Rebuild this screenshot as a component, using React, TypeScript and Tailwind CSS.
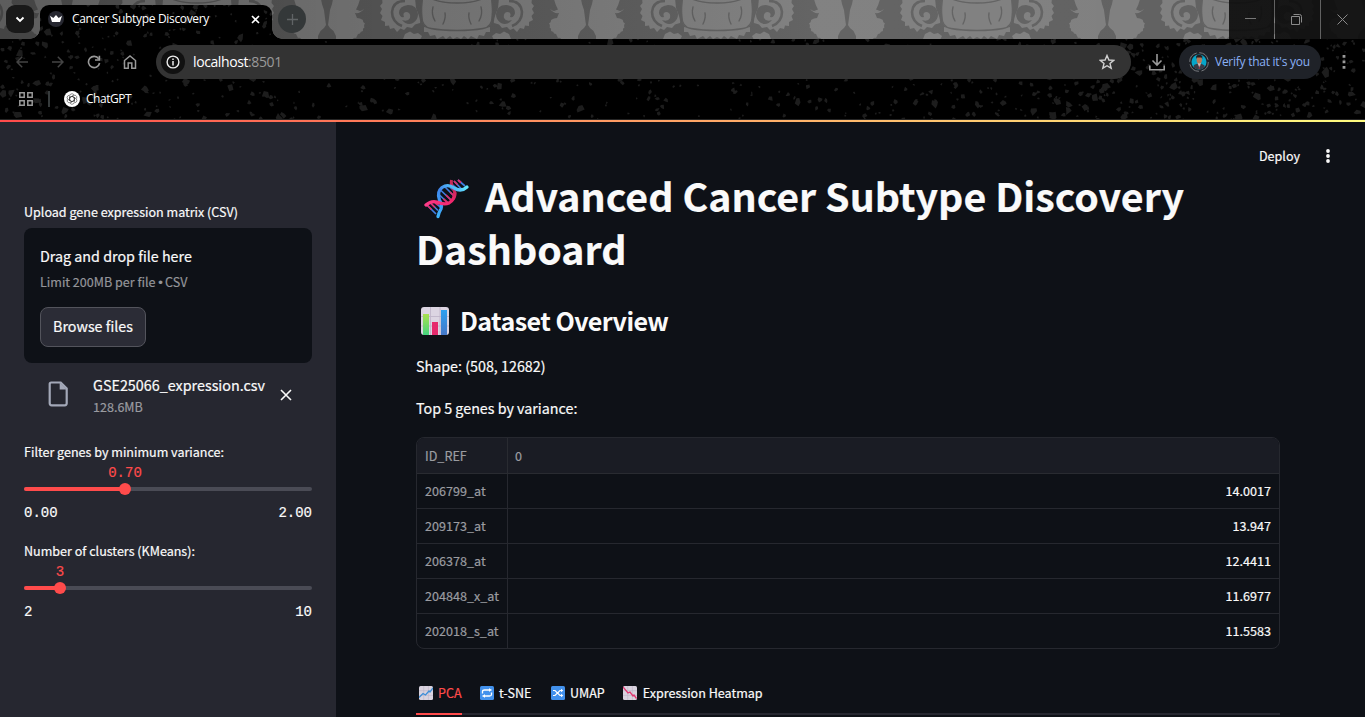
import React from "react";

const sans = "font-['Noto_Sans_CJK_SC',sans-serif]";
const ui = "font-['Open_Sans','Noto_Sans',sans-serif]";
const mono = "font-['Liberation_Mono',monospace]";

function makeSpeckles() {
  let seed = 4217;
  const rnd = () => {
    seed = (seed * 1664525 + 1013904223) % 4294967296;
    return seed / 4294967296;
  };
  const parts: string[] = [];
  for (let i = 0; i < 2200; i++) {
    const x = rnd() * 1365;
    const y = rnd() * 120;
    const density = x < 290 ? 0.65 : x < 480 ? 0.34 : x < 860 ? 0.45 : x < 980 ? 0.6 : 0.95;
    const keep = rnd() < density;
    const big = rnd();
    const r = big > 0.9 ? 4 : big > 0.5 ? 2.5 : 1.3;
    const n = 5;
    const pts: string[] = [];
    for (let k = 0; k < n; k++) {
      const a = (k / n) * Math.PI * 2 + rnd() * 0.9;
      const q = r * (0.55 + rnd() * 0.7);
      pts.push(`${(x + Math.cos(a) * q).toFixed(1)} ${(y + Math.sin(a) * q).toFixed(1)}`);
    }
    if (keep) parts.push(`M${pts.join("L")}Z`);
  }
  return parts.join("");
}
const speckles = makeSpeckles();

function HalfMotif() {
  return (
    <g>
      <path d="M0-1H34Q35 5 35 16Q36 27 26 29Q14 31 0 31Z" fill="#777" />
      <path d="M0 30Q18 31 33 27L33 32L29 32L27 36L22 35L20 39L14 36L11 39L7 36L4 39L0 37Z" fill="#777" />
      <path d="M0 3Q16 3 25-1M35 0Q36 8 35 17Q35 27 26 28.500Q15 30.500 0 30.500" fill="none" stroke="#585858" strokeWidth="1.300" />
      <path d="M24 7Q26 14 22 21M12 13Q11 18 14 24" fill="none" stroke="#585858" strokeWidth="1.400" strokeLinecap="round" />
      <path d="M42-2H75L74.500 3L77 6L75 9L77 13L74.500 16L76 20L72 22L72 26L68 25.500L67 29L63 28L60 32L56.500 28.500L53 30L50 27L45 28L42 24.500L37 23Q36 20 41 8Z" fill="#777" />
      <path d="M52 1Q64 1 65 12Q65 22 55 26" fill="none" stroke="#585858" strokeWidth="2.600" />
      <path d="M39 14Q40 5 49 5Q58 6 58 13Q57 18 53 17Q55 12 50 12Q46 13 47 18Q49 22 55 20Q50 26 44 23Q39 20 39 14Z" fill="#585858" />
      <path d="M37 40L35 36L39 33L43 34L47 31.500L52 34L54 39L51 41Z" fill="#777" />
      <path d="M124-1L125 4L127 10L128 18L129 25L127 28L123.500 31L121 36L121 40L105 40Q103 37 101 38L99 34Q96 34 96.500 32L94 31Q94.500 28 92.500 27.500Q93.500 25 92 23.500Q94.500 22 94 20Q97 18 100 18L102 13L97 11L101 9.500Q98 4 97-1Z" fill="#777" />
      <path d="M93 9Q98 13 103 10L102 13Q97 14 93 9Z" fill="#777" />
    </g>
  );
}

function TabStripArt() {
  return (
    <svg className="absolute inset-0" width="1365" height="39" viewBox="0 0 1365 39" aria-hidden>
      <defs>
        <linearGradient id="stripShade" x1="0" x2="1">
          <stop offset="0" stopColor="#000" stopOpacity=".22" />
          <stop offset=".3" stopColor="#000" stopOpacity=".06" />
          <stop offset=".6" stopColor="#fff" stopOpacity=".08" />
          <stop offset="1" stopColor="#fff" stopOpacity=".06" />
        </linearGradient>
      </defs>
      <rect width="1365" height="39" fill="#575757" />
      {[-63, 197, 457, 717, 977, 1237, 1497].map((x) => (
        <g key={x}>
          <g transform={`translate(${x} 0)`}><HalfMotif /></g>
          <g transform={`translate(${x} 0) scale(-1 1)`}><HalfMotif /></g>
        </g>
      ))}
      <rect width="1365" height="39" fill="url(#stripShade)" />
      <path d="M1229 0H1274V39H1229ZM1275 0H1320V39H1275ZM1321 0H1365V39H1321Z" fill="#0b0b0b" fillOpacity=".9" />
    </svg>
  );
}

function ThemeSpeckles() {
  return (
    <svg className="absolute inset-0" width="1365" height="120" viewBox="0 0 1365 120" aria-hidden>
      <clipPath id="chromeArea">
        <path d="M0 39H30Q40 38 40 29V13Q40 5 48 5H264Q272 5 272 13V29Q273 39 282 39H1365V119H0Z" />
      </clipPath>
      <path d={speckles} fill="#1d1d1d" clipPath="url(#chromeArea)" />
    </svg>
  );
}

function Ic({ w, h = w, vb, children, cls = "" }: { w: number; h?: number; vb?: string; children: React.ReactNode; cls?: string }) {
  return (
    <svg width={w} height={h} viewBox={vb ?? `0 0 ${w} ${h}`} fill="none" className={`block shrink-0 ${cls}`} aria-hidden>
      {children}
    </svg>
  );
}

function BrowserChrome() {
  return (
    <header className={`relative h-[120px] w-full overflow-hidden bg-black text-white ${ui}`}>
      <TabStripArt />
      <div className="relative flex h-[39px] items-start">
        <div className="h-[39px] w-[40px] shrink-0 pl-[6px] pt-[5px]">
          <div className="relative z-20 flex h-7 w-7 items-center justify-center rounded-[9px] bg-[#191919]">
            <Ic w={10} h={7}><path d="M1.500 1.500L5 5L8.500 1.500" stroke="#fff" strokeWidth="1.900" /></Ic>
          </div>
          <div className="absolute bottom-0 left-[30px] h-[10px] w-[10px] bg-[radial-gradient(circle_at_0_0,transparent_9.5px,#000_10px)]" />
        </div>
        <div className="mt-[5px] h-[34px] w-[232px] shrink-0 rounded-t-[9px] bg-black">
          <div className="relative z-20 flex h-7 items-center pl-2 pr-[12px]">
            <Ic w={16}>
              <circle cx="8" cy="8" r="8" fill="#262730" />
              <path d="M2 4.800L5.300 6.900L8 4L10.700 6.900L14 4.800L12 11H4Z" fill="#fff" />
            </Ic>
            <span className="ml-[8px] whitespace-nowrap text-[12px] leading-4 tracking-[-0.33px]">Cancer Subtype Discovery</span>
            <Ic w={9} cls="ml-auto"><path d="M1 1L8 8M8 1L1 8" stroke="#fff" strokeWidth="1.600" /></Ic>
          </div>
        </div>
        <div className="relative h-[39px]">
          <div className="absolute bottom-0 left-0 h-[10px] w-[10px] bg-[radial-gradient(circle_at_100%_0,transparent_9.5px,#000_10px)]" />
          <div className="relative z-20 ml-[6px] mt-[5px] flex h-7 w-7 items-center justify-center rounded-full bg-[#343839]">
            <Ic w={11}><path d="M5.500 0V11M0 5.500H11" stroke="#606466" strokeWidth="1.300" /></Ic>
          </div>
        </div>
        <div className="z-20 ml-auto flex h-[39px] w-[136px] items-center">
          <div className="flex w-[46px] justify-center pr-[3px]"><Ic w={11} cls="-mt-[2px]"><path d="M0 5.500H11" stroke="#777" /></Ic></div>
          <div className="flex w-[46px] justify-center pr-[3px]">
            <Ic w={11} cls="-mt-px"><path d="M.5 2.500H8.500V10.500H.5ZM2.500 .5H8.500Q10.500.5 10.500 2.500V8.500" stroke="#8a8a8a" /></Ic>
          </div>
          <div className="flex w-[44px] justify-center pr-px"><Ic w={11} cls="-mt-px"><path d="M.5.5L10.500 10.500M10.500.5L.5 10.500" stroke="#8a8a8a" /></Ic></div>
        </div>
      </div>
      <ThemeSpeckles />
      <div className="relative flex h-[46px] items-center pl-[16px] pr-[12px]">
        <Ic w={12} cls="ml-0"><path d="M12 6H1M6.200.8L1 6L6.200 11.200" stroke="#444" strokeWidth="1.500" /></Ic>
        <Ic w={12} cls="ml-[24px]"><path d="M0 6H11M5.800.8L11 6L5.800 11.200" stroke="#444" strokeWidth="1.500" /></Ic>
        <Ic w={14} cls="ml-[23px]">
          <path d="M11.700 3.800A5.600 5.600 0 1 0 12.600 8" stroke="#999" strokeWidth="1.600" />
          <path d="M12.400.8V5H8" stroke="#999" strokeWidth="1.600" />
        </Ic>
        <Ic w={14} cls="ml-[22px]"><path d="M1.500 5.500L7 1L12.500 5.500V13.200H8.800V8H5.200V13.200H1.500Z" stroke="#999" strokeWidth="1.500" /></Ic>
        <div className="ml-[19px] flex h-[34px] w-[975px] shrink-0 items-center rounded-full bg-[#333] pl-[5px] pr-[16px]">
          <div className="flex h-6 w-6 items-center justify-center rounded-full bg-[#111]">
            <Ic w={14}><circle cx="7" cy="7" r="5.900" stroke="#eee" strokeWidth="1.400" /><path d="M7 6V10.500M7 3.500V5" stroke="#eee" strokeWidth="1.500" /></Ic>
          </div>
          <span className="ml-[8px] text-[14px] leading-5 tracking-[-0.4px]">localhost<span className="text-[#9a9a9a]">:8501</span></span>
          <Ic w={16} cls="ml-auto"><path d="M8 1.500L9.900 6L14.700 6.400L11 9.500L12.200 14.200L8 11.700L3.800 14.200L5 9.500L1.300 6.400L6.100 6Z" stroke="#d0d0d0" strokeWidth="1.400" /></Ic>
        </div>
        <Ic w={16} h={17} cls="ml-[18px]"><path d="M8 0V11M3.500 6.500L8 11L12.500 6.500M.8 11.500V15.700H15.200V11.500" stroke="#999" strokeWidth="1.600" /></Ic>
        <div className="ml-[14px] flex h-[34px] w-[142px] shrink-0 items-center rounded-full bg-[#1f2228] pl-[10px]">
          <Ic w={20}>
            <circle cx="10" cy="10" r="9.300" stroke="#76797d" strokeWidth="1" strokeDasharray="12 2.600" />
            <clipPath id="avatarClip"><circle cx="10" cy="10" r="7.500" /></clipPath>
            <g clipPath="url(#avatarClip)">
              <rect width="20" height="20" fill="#06a6c9" />
              <path d="M4 18L5 13L8.500 11.500H12L15.500 13.500L16 18Z" fill="#393b46" />
              <path d="M8.500 11H12L10.500 16Z" fill="#d9c0bb" />
              <path d="M10.200 13L11 17H9.500Z" fill="#8e3141" />
              <ellipse cx="10.300" cy="7.800" rx="2.700" ry="3.800" fill="#b97855" />
              <path d="M7.200 7V4Q10 1.500 13.300 4V7L12.500 5.500H8Z" fill="#221d20" />
            </g>
          </Ic>
          <span className="ml-[6px] whitespace-nowrap text-[12px] leading-4 tracking-[-0.26px] text-[#8ab0f5]">Verify that it's you</span>
        </div>
        <Ic w={4} h={16} cls="ml-[21px]"><path d="M.6 1H3.400V3.800H.6ZM.6 6.500H3.400V9.300H.6ZM.6 12H3.400V14.800H.6Z" fill="#999" /></Ic>
      </div>
      <div className="relative flex h-[28px] items-center pl-[19px]">
        <Ic w={14}><path d="M.8.8H5.200V5.200H.8ZM8.800.8H13.200V5.200H8.800ZM.8 8.800H5.200V13.200H.8ZM8.800 8.800H13.200V13.200H8.800Z" stroke="#999" strokeWidth="1.500" /></Ic>
        <div className="ml-[15px] h-4 w-[2px] bg-[#363b3c]" />
        <Ic w={16} cls="ml-[14px]">
          <circle cx="8" cy="8" r="8" fill="#fff" />
          {[0, 60, 120, 180, 240, 300].map((a) => (
            <path key={a} transform={`rotate(${a} 8 8)`} d="M5.700 6.600L8 5.300L10.400 6.700V10.200M5.700 6.600V4.500Q6.300 2.600 8.200 2.700L10 3.700" stroke="#333" strokeWidth=".55" />
          ))}
        </Ic>
        <span className="ml-[6px] text-[12px] leading-4 tracking-[-0.45px]">ChatGPT</span>
      </div>
      <div className="absolute bottom-0 h-px w-full bg-[#262626]" />
    </header>
  );
}

function Slider({ label, value, min, max, left, gap }: { label: string; value: string; min: string; max: string; left: number; gap: string }) {
  return (
    <div className={gap}>
      <div className="h-5 text-[12.55px] leading-5">{label}</div>
      <div className="relative h-[29px]">
        <span className={`absolute top-px -translate-x-1/2 text-[14px] leading-5 text-[#ff4b4b] ${mono}`} style={{ left }}>{value}</span>
        <div className="absolute bottom-0 h-1 w-full rounded-full bg-[#4a4b55]">
          <div className="h-1 rounded-full bg-[#ff4b4b]" style={{ width: left }} />
          <div className="absolute -top-1 h-3 w-3 -translate-x-1/2 rounded-full bg-[#ff4b4b]" style={{ left }} />
        </div>
      </div>
      <div className={`mt-[12px] flex h-5 justify-between text-[14px] leading-5 ${mono}`}><span>{min}</span><span>{max}</span></div>
    </div>
  );
}

function Sidebar() {
  return (
    <aside className="flex w-[336px] shrink-0 flex-col bg-[#262730] px-6 pt-[80px] [-webkit-text-stroke:0.2px]">
      <div className="h-[26px] whitespace-nowrap text-[12.55px] leading-5">Upload gene expression matrix (CSV)</div>
      <div className="h-[135px] rounded-lg bg-[#0e1117] px-4 pt-4">
        <div className="h-[26px] text-[14.3px] leading-[24px]">Drag and drop file here</div>
        <div className="h-[37px] whitespace-nowrap text-[12.55px] leading-6 text-[#94959a]">Limit 200MB per file <span className="inline-block w-[4px] font-['Liberation_Sans'] text-[13px] leading-4">•</span> CSV</div>
        <button className="block h-10 w-[106px] whitespace-nowrap rounded-lg border border-[#53545c] bg-[#2b2c36] pb-[2px] text-center text-[14.3px] leading-[36px]">Browse files</button>
      </div>
      <div className="flex h-[62px] items-center pl-[24px]">
        <Ic w={20} h={26} cls="-mt-px">
          <path d="M3.200 1.500H12.700L18.700 7.500V22.300Q18.700 24.300 16.700 24.300H3.700Q1.700 24.300 1.700 22.300V3Q1.700 1.500 3.200 1.500Z" stroke="#a3a8b8" strokeWidth="2.200" />
          <path d="M11.700 1.500V8.500H18.700Z" fill="#a3a8b8" />
        </Ic>
        <div className="ml-[25px] w-[173px] pt-[4px]">
          <div className="h-[22px] whitespace-nowrap text-[14.35px] leading-[20px]">GSE25066_expression.csv</div>
          <div className="text-[12.55px] leading-[20px] text-[#9a9ba0]">128.6MB</div>
        </div>
        <Ic w={12} cls="ml-[14px] mt-px"><path d="M1 1L11 11M11 1L1 11" stroke="#fafafa" strokeWidth="1.600" /></Ic>
      </div>
      <Slider gap="mt-[17px]" label="Filter genes by minimum variance:" value="0.70" min="0.00" max="2.00" left={101} />
      <Slider gap="mt-[18px]" label="Number of clusters (KMeans):" value="3" min="2" max="10" left={36} />
    </aside>
  );
}

function Dna() {
  return (
    <Ic w={46} h={40} cls="ml-[8px] mr-[-2px] mt-[10px]">
      <defs>
        <linearGradient id="dnaBlue" x1="14" y1="38" x2="43" y2="9" gradientUnits="userSpaceOnUse"><stop stopColor="#3cb4fb" /><stop offset=".5" stopColor="#3f86ee" /><stop offset="1" stopColor="#62e8ff" /></linearGradient>
        <linearGradient id="dnaPink" x1="0" y1="26" x2="30" y2="0" gradientUnits="userSpaceOnUse"><stop stopColor="#ff3c8a" /><stop offset=".6" stopColor="#f0266c" /><stop offset="1" stopColor="#b52a55" /></linearGradient>
      </defs>
      <path d="M3 26L12 35M7 24.500L14 31.500M11 23.500L17 28.500M15.500 16L24 24M17 11.500L27 21M21 8L30 17M26 8L30.500 12M28.500 6L33 10M30 2L37 9.500M34 1L41 7" stroke="#3f7ee0" strokeWidth="1.700" />
      <path d="M3 26L7.500 30.500M7 24.500L11 28.500M11 23.500L14 26M19.500 20L24 24M22 16L27 21M26 13L30 17M30 2L33.500 5.500M34 1L37 3.500" stroke="#e32b69" strokeWidth="1.700" />
      <path d="M27.500 1Q26.500 6 30 11Q32 16 28.500 21" stroke="#c72a56" strokeWidth="3" />
      <path d="M14 37.500Q14.500 34 17 30Q18.500 26 15.500 21Q12.500 13 18 8.500Q24 4.500 30 9Q37 13.500 43 8" stroke="url(#dnaBlue)" strokeWidth="3.300" strokeLinecap="round" />
      <path d="M2 26Q7 21.500 13 23Q20 26 25 24Q31 20 31 14" stroke="url(#dnaPink)" strokeWidth="3.300" strokeLinecap="round" />
    </Ic>
  );
}

function ChartTile({ down }: { down?: boolean }) {
  return (
    <Ic w={14}>
      <rect width="14" height="14" rx="1.500" fill="#d9d3df" />
      <path d="M4.700 0V14M9.400 0V14M0 4.700H14M0 9.400H14" stroke="#bdb5c8" strokeWidth=".6" />
      {down ? <path d="M0 1L5 7L7 6L10 10L11 9L13.500 12.500" stroke="#e0366f" strokeWidth="1.300" /> : <path d="M0 11.500L4 7.500L6.500 9L10 5L11 6L14 2" stroke="#3d8ed8" strokeWidth="1.300" />}
    </Ic>
  );
}

function BlueTile({ children }: { children: React.ReactNode }) {
  return <Ic w={14}><rect width="14" height="14" rx="1.500" fill="#4291ec" />{children}</Ic>;
}

const rows = [["206799_at", "14.0017"], ["209173_at", "13.947"], ["206378_at", "12.4411"], ["204848_x_at", "11.6977"], ["202018_s_at", "11.5583"]];

function Main() {
  return (
    <main className="relative min-w-0 flex-1 px-[80px] pt-[46px] [-webkit-text-stroke:0.2px]">
      <div className="absolute right-[35px] top-[22px] flex items-center text-[12.55px] leading-6">
        <span>Deploy</span>
        <Ic w={4} h={14} cls="ml-[26px]"><circle cx="2" cy="2" r="1.900" fill="#fafafa" /><circle cx="2" cy="7" r="1.900" fill="#fafafa" /><circle cx="2" cy="12" r="1.900" fill="#fafafa" /></Ic>
      </div>
      <h1 className="h-[106px] w-[864px] text-[39.35px] font-bold leading-[53px]">
        <span className="flex h-[53px] whitespace-nowrap pt-px leading-[51px]"><Dna /><span className="ml-[17px]">Advanced Cancer Subtype Discovery</span></span>
        <span className="block">Dashboard</span>
      </h1>
      <h2 className="mt-[30px] flex h-[34px] items-start text-[25.1px] font-semibold leading-[32px] tracking-[-0.58px] [-webkit-text-stroke:0]">
        <Ic w={28} cls="ml-[5px] mr-[11px] mt-[3px]">
          <defs>
            <linearGradient id="gBar" x1="0" x2="0" y1="0" y2="1"><stop stopColor="#a9e04e" /><stop offset="1" stopColor="#45d47f" /></linearGradient>
            <linearGradient id="bBar" x1="0" x2="0" y1="0" y2="1"><stop stopColor="#2da0f0" /><stop offset="1" stopColor="#4678c8" /></linearGradient>
          </defs>
          <rect width="28" height="28" rx="3" fill="#dcd5e2" />
          <path d="M9.500 0V28M19 0V28M0 9.500H28M0 19H28" stroke="#bfb6ca" strokeWidth=".9" />
          <path d="M2 7H8V28H2Z" fill="url(#gBar)" /><path d="M11 15H17V28H11Z" fill="#e62a6d" /><path d="M20 3H26V28H20Z" fill="url(#bBar)" />
        </Ic>
        Dataset Overview
      </h2>
      <p className="mt-[16px] h-6 text-[14.3px] leading-6">Shape: (508, 12682)</p>
      <p className="mt-[18px] h-6 text-[14.3px] leading-6">Top 5 genes by variance:</p>
      <div className="mt-[17px] h-[212px] w-[864px] overflow-hidden rounded-lg border border-[#26282f] text-[12.6px]">
        <div className="flex h-[36px] border-b border-[#292b31] bg-[#1a1c24] leading-[35px] text-[#9b9ca1]">
          <div className="w-[91px] border-r border-[#292b31] pl-2">ID_REF</div>
          <div className="pl-[7px]">0</div>
        </div>
        {rows.map(([id, v]) => (
          <div key={id} className="flex h-[35px] border-b border-[#26282f] leading-[34px] last:border-b-0">
            <div className="w-[91px] whitespace-nowrap border-r border-[#26282f] pl-2 text-[#9b9ca1]">{id}</div>
            <div className="flex-1 pr-2 text-right">{v}</div>
          </div>
        ))}
      </div>
      <nav className="mt-[24px] flex h-[42px] w-[864px] border-b-2 border-[#262730] text-[12.55px] leading-[38px]">
        <div className="flex h-[42px] w-[46px] items-center gap-[5px] whitespace-nowrap border-b-2 border-[#ff4b4b] pb-px pl-[3px] text-[#ff4b4b]"><ChartTile />PCA</div>
        <div className="ml-[18px] flex h-[42px] items-center gap-[5px] border-b-2 border-transparent pb-px">
          <BlueTile><path d="M11.500 4H4.500Q2.500 4 2.500 5.500V7.500M2.500 10H9.500Q11.500 10 11.500 8.500V6.500" stroke="#fff" strokeWidth="1.300" /><path d="M9 2L11 4L9 6ZM5 8L3 10L5 12Z" fill="#fff" /></BlueTile>t-SNE
        </div>
        <div className="ml-[19.5px] flex h-[42px] items-center gap-[5px] border-b-2 border-transparent pb-px">
          <BlueTile><path d="M2 4.500H4L9 9.500H11M2 9.500H4L9 4.500H11" stroke="#fff" strokeWidth="1.200" /><path d="M10 2.700L12.300 4.500L10 6.300ZM10 7.700L12.300 9.500L10 11.300Z" fill="#fff" /></BlueTile>UMAP
        </div>
        <div className="ml-[18px] flex h-[42px] items-center gap-[6px] border-b-2 border-transparent pb-px"><ChartTile down />Expression Heatmap</div>
      </nav>
    </main>
  );
}

export default function App() {
  return (
    <div className="h-[717px] w-[1365px] overflow-hidden bg-[#0e1117]">
      <BrowserChrome />
      <div className="h-[2px] bg-[linear-gradient(90deg,#ff4b4b,#fffd80)]" />
      <div className={`flex h-[595px] text-[#fafafa] ${sans}`}>
        <Sidebar />
        <Main />
      </div>
    </div>
  );
}
